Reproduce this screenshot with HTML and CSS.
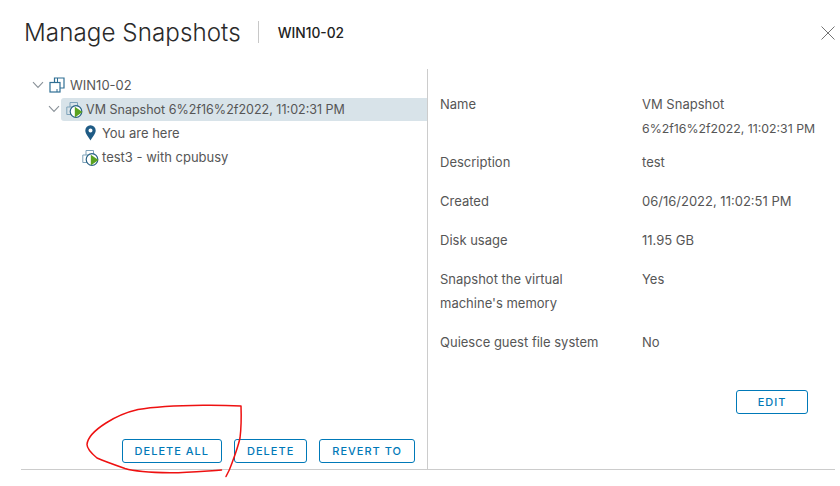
FILE: index.html
```html
<!DOCTYPE html>
<html lang="en">
<head>
<meta charset="utf-8">
<title>Manage Snapshots</title>
<link rel="stylesheet" href="styles.css">
</head>
<body>
<svg class="sprites" width="0" height="0" aria-hidden="true">
  <symbol id="chev" viewBox="0 0 12 8"><path d="M1 1.2 6 6.4 11 1.2" fill="none" stroke="#8a9299" stroke-width="1.1"/></symbol>
  <symbol id="vm" viewBox="0 0 16 16">
    <path d="M5.500 5V1H15V11H11" fill="none" stroke="#2f6f94" stroke-width="1.200"/>
    <rect x="1" y="5.500" width="10" height="9.500" fill="none" stroke="#2f6f94" stroke-width="1.200"/>
    <path d="M8.500 1V5.500M8 15v-3" fill="none" stroke="#2f6f94" stroke-width="1"/>
  </symbol>
  <symbol id="snap" viewBox="0 0 17 17">
    <path d="M4 6V1.500h7.500V6" fill="none" stroke="#7fa3ba" stroke-width="1"/>
    <path d="M5 13.500H.8V6H8" fill="none" stroke="#7fa3ba" stroke-width="1"/>
    <circle cx="10" cy="10.500" r="5.800" fill="#fff" stroke="#2a6285" stroke-width="1.200"/>
    <path d="M8.800 5.800 16.500 11 8.800 16.600Z" fill="#5aa220"/>
  </symbol>
</svg>
<div class="dialog">
  <header class="head">
    <h1 class="title">Manage Snapshots</h1>
    <span class="sep"></span>
    <span class="sub">WIN10-02</span>
    <svg class="close" viewBox="0 0 14 14"><path d="M.5.5l13 13M13.500.5l-13 13" stroke="#747474" stroke-width="1"/></svg>
  </header>
  <main class="main">
    <section class="left">
      <ul class="tree">
        <li class="row d0">
          <svg class="chev"><use href="#chev"/></svg>
          <svg class="ic-vm"><use href="#vm"/></svg>
          <span>WIN10-02</span>
        </li>
        <li class="row d1">
          <svg class="chev"><use href="#chev"/></svg>
          <div class="sel">
            <svg class="ic-snap"><use href="#snap"/></svg>
            <span class="name">VM Snapshot 6%2f16%2f2022, 11:02:31 PM</span>
          </div>
        </li>
        <li class="row d2">
          <svg class="ic-pin" viewBox="0 0 11 16"><path d="M5.500.3A5.200 5.200 0 0 0 .3 5.500c0 3.300 3.400 6.700 5.200 10 1.800-3.300 5.200-6.700 5.200-10A5.200 5.200 0 0 0 5.500.3Zm0 7.200a2 2 0 1 1 0-4 2 2 0 0 1 0 4Z" fill="#1f5b85"/></svg>
          <span>You are here</span>
        </li>
        <li class="row d3">
          <svg class="ic-snap"><use href="#snap"/></svg>
          <span>test3 - with cpubusy</span>
        </li>
      </ul>
      <div class="actions">
        <button class="btn">DELETE ALL</button>
        <button class="btn">DELETE</button>
        <button class="btn">REVERT TO</button>
      </div>
    </section>
    <section class="right">
      <dl class="props">
        <dt class="tight">Name</dt><dd class="tight">VM Snapshot<br><span class="stamp">6%2f16%2f2022, 11:02:31 PM</span></dd>
        <dt>Description</dt><dd>test</dd>
        <dt>Created</dt><dd>06/16/2022, 11:02:51 PM</dd>
        <dt>Disk usage</dt><dd>11.95 GB</dd>
        <dt>Snapshot the virtual<br>machine's memory</dt><dd>Yes</dd>
        <dt>Quiesce guest file system</dt><dd>No</dd>
      </dl>
      <div class="edit-wrap"><button class="btn btn-edit">EDIT</button></div>
    </section>
  </main>
</div>
<svg class="scribble" viewBox="0 0 840 486" aria-hidden="true">
  <path d="M221.500 470C200 471.500 185 473 170 472.800C150 472.500 135 471.500 125 468.500C115 465 105 461.500 97 458C91 453 87 449 87 444.500C87.500 438 95 430 106 423C116 416.500 125 412.500 138 409.500C155 406.500 175 405.500 203 405.200C220 405 232 405.500 241 406C241.500 420 241 430 240 438C238 447 235 455 232 463C230 469 228 473 226 476.500" fill="none" stroke="#ee1111" stroke-width="1.500" stroke-linecap="round" stroke-linejoin="round"/>
</svg>
</body>
</html>
```
FILE: styles.css
```css
* { box-sizing: border-box; }
html, body { margin: 0; height: 100%; background: #fff; overflow: hidden; }
body { font-family: Inter, "Open Sans", sans-serif; color: #565656; font-size: 13px; }
.sprites { position: absolute; }
.dialog { width: 840px; height: 486px; padding: 0 5px 0 21px; display: flex; flex-direction: column; }
.head { height: 69px; padding: 0 1px 6px 3px; display: flex; align-items: center; flex: none; }
.title { margin: 2px 0 0; font-size: 24.200px; font-weight: 300; color: #2a2a2a; white-space: nowrap; letter-spacing: .05px; }
.sep { width: 1px; height: 22px; background: #c8c8c8; margin: 0 19px 0 17px; }
.sub { margin-top: 2px; font-size: 13.800px; font-weight: 500; color: #222; }
.close { width: 14px; height: 14px; margin-left: auto; margin-top: 3px; position: relative; left: 1px; }
.main { height: 401px; flex: none; display: flex; border-bottom: 1px solid #ccc; }
.left { width: 407px; flex: none; border-right: 1px solid #ccc; display: flex; flex-direction: column; }
.tree { list-style: none; margin: 0; padding: 4px 0 0; }
.row { height: 24px; display: flex; align-items: center; white-space: nowrap; }
.d0 { padding-left: 11px; }
.d1 { padding-left: 27px; }
.d2 { padding-left: 64px; }
.d3 { padding-left: 61px; }
.chev { width: 12px; height: 8px; flex: none; }
.ic-vm { width: 16px; height: 16px; margin: 0 5px; flex: none; }
.ic-snap { width: 17px; height: 17px; flex: none; margin-right: 3px; }
.ic-pin { width: 11px; height: 16px; flex: none; margin-right: 6px; }
.sel { flex: 1; height: 23px; margin-top: 1px; margin-left: 1px; padding-left: 5px; display: flex; align-items: center; background: #d8e3e9; border-radius: 3px 0 0 3px; }
.name { font-size: 12.520px; }
.stamp { font-size: 12.300px; }
.actions { margin-top: auto; padding: 0 12px 6px 0; display: flex; justify-content: flex-end; gap: 12px; }
.btn { height: 24px; padding: 0 12px; background: #fff; border: 1px solid #0079b8; border-radius: 3px; color: #0079b8; font-family: inherit; font-size: 11px; font-weight: 500; letter-spacing: 1px; white-space: nowrap; }
.right { flex: 1; min-width: 0; padding: 23px 27px 0 12px; display: flex; flex-direction: column; }
.props { margin: 0; display: grid; grid-template-columns: 202px 1fr; row-gap: 15px; line-height: 24px; white-space: nowrap; }
.props dt, .props dd { margin: 0; }
.props .tight { margin-bottom: -6px; }
.edit-wrap { margin-top: 36px; display: flex; justify-content: flex-end; }
.btn-edit { width: 72px; padding: 0; }
.scribble { position: absolute; left: 0; top: 0; width: 840px; height: 486px; pointer-events: none; }
```
